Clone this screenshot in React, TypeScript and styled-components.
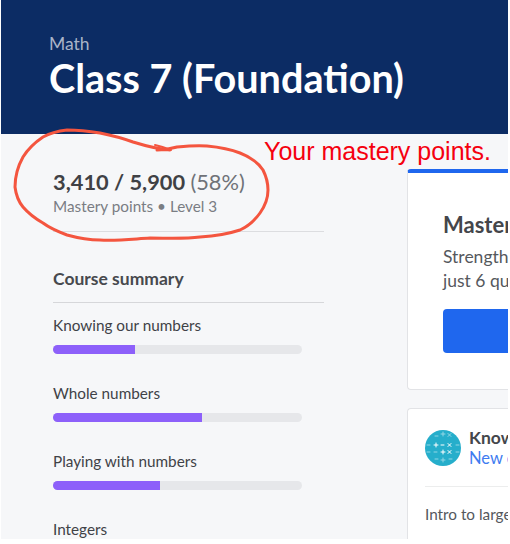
import React from "react";
import styled, { createGlobalStyle } from "styled-components";

const GlobalStyle = createGlobalStyle`
  html, body {
    margin: 0;
    padding: 0;
    background: #ffffff;
  }
`;

const Root = styled.div`
  position: relative;
  width: 510px;
  height: 544px;
  overflow: hidden;
  font-family: Lato, "Open Sans", sans-serif;
  background: #ffffff;
`;

const Page = styled.div`
  margin-left: 1px;
  margin-right: 2px;
  height: 539px;
  background: #f6f7f9;
  overflow: hidden;
`;

const Hero = styled.header`
  height: 134px;
  padding: 34px 0 0 48px;
  box-sizing: border-box;
  background: #0c2c64;
`;

const Subject = styled.div`
  font-size: 17.5px;
  line-height: 20px;
  color: #a9b4c8;
`;

const Title = styled.h1`
  margin: 0;
  font-size: 39.6px;
  line-height: 47px;
  font-weight: 700;
  color: #ffffff;
  white-space: nowrap;
`;

const Body = styled.div`
  display: flex;
`;

const Sidebar = styled.aside`
  width: 271px;
  margin-left: 52px;
  padding-top: 36px;
  flex-shrink: 0;
`;

const Score = styled.div`
  font-size: 21.8px;
  line-height: 24px;
  font-weight: 700;
  color: #3f4145;
`;

const Percent = styled.span`
  font-weight: 400;
  color: #6f7278;
`;

const ScoreLabel = styled.div`
  margin-top: 3px;
  font-size: 15.3px;
  line-height: 18px;
  color: #7a7d83;
  padding-bottom: 16px;
  border-bottom: 1px solid #dcdde0;
`;

const SummaryTitle = styled.h2`
  margin: 37px 0 0;
  padding-bottom: 13px;
  font-size: 17.5px;
  line-height: 20px;
  font-weight: 700;
  color: #47494e;
  border-bottom: 1px solid #d6d7da;
`;

const Units = styled.div`
  display: flex;
  flex-direction: column;
  gap: 30px;
  margin-top: 13px;
  width: 249px;
`;

const UnitName = styled.div`
  font-size: 15.3px;
  line-height: 18px;
  color: #3f4247;
`;

const Track = styled.div`
  height: 9px;
  margin-top: 11px;
  border-radius: 5px;
  background: #e6e7ea;
  overflow: hidden;
`;

const Fill = styled.div`
  height: 100%;
  background: #8d60fa;
`;

const Main = styled.main`
  flex: 1;
  margin-left: 83px;
  padding-top: 35px;
  display: flex;
  flex-direction: column;
  gap: 18px;
  min-width: 0;
`;

const Card = styled.section<{ $accent?: boolean }>`
  background: #ffffff;
  border: 1px solid #e2e3e6;
  border-right: none;
  border-radius: 4px 0 0 4px;
  box-sizing: border-box;
  ${({ $accent }) => ($accent ? "border-top: 4px solid #1f67ee;" : "")}
`;

const MasteryCard = styled(Card)`
  height: 221px;
  padding: 39px 0 0 35px;
  white-space: nowrap;
  overflow: hidden;
`;

const CardTitle = styled.div`
  font-size: 22px;
  line-height: 26px;
  font-weight: 700;
  color: #44464b;
`;

const CardText = styled.div`
  margin-top: 7px;
  font-size: 17.5px;
  line-height: 24px;
  color: #55585d;
`;

const StartButton = styled.div`
  height: 44px;
  margin-top: 16px;
  border-radius: 4px 0 0 4px;
  background: #1f67ee;
`;

const UnitCard = styled(Card)`
  height: 200px;
  padding: 19px 0 0 17px;
  white-space: nowrap;
  overflow: hidden;
`;

const UnitHead = styled.div`
  display: flex;
  align-items: center;
  gap: 8px;
  padding-bottom: 18px;
  border-bottom: 1px solid #eceded;
`;

const UnitTitle = styled.div`
  font-size: 17.5px;
  line-height: 20px;
  font-weight: 700;
  color: #44464b;
`;

const UnitLink = styled.div`
  font-size: 16.5px;
  line-height: 20px;
  color: #3f7cf0;
`;

const UnitDesc = styled.div`
  margin-top: 18px;
  font-size: 15.3px;
  line-height: 18px;
  color: #55585d;
`;

const Note = styled.div`
  position: absolute;
  left: 264px;
  top: 136px;
  font-family: "Liberation Sans", Arial, sans-serif;
  font-size: 25px;
  line-height: 30px;
  white-space: nowrap;
  color: #f5000f;
`;

const Scribble = styled.svg`
  position: absolute;
  left: 0;
  top: 120px;
`;

const units = [
  { name: "Knowing our numbers", value: 33 },
  { name: "Whole numbers", value: 60 },
  { name: "Playing with numbers", value: 43 },
  { name: "Integers", value: 0 },
];

const MathBadge = () => (
  <svg width="36" height="36" viewBox="0 0 36 36" style={{ flexShrink: 0 }}>
    <circle cx="18" cy="18" r="18" fill="#26aecb" />
    <g stroke="#ffffff" strokeWidth="1" strokeLinecap="round">
      <path d="M9 15h4M11 13v4M16 15h3M23 13.500l3 3M26 13.500l-3 3" />
      <path d="M16 22h4M18 20v4M23 20.500l3 3M26 20.500l-3 3" />
      <path d="M9 22h3M2 15h3M2 22h3M31 15h3M31 22h3" opacity="0.5" />
      <path d="M10 6h3M16 4h4M18 2v4M23 3.500l3 3M26 3.500l-3 3" opacity="0.5" />
      <path d="M16 30h4M18 28v4M10 29h3M24 29h3" opacity="0.5" />
    </g>
  </svg>
);

const App = () => (
  <Root>
    <GlobalStyle />
    <Page>
      <Hero>
        <Subject>Math</Subject>
        <Title>Class 7 (Foundation)</Title>
      </Hero>
      <Body>
        <Sidebar>
          <Score>
            3,410 / 5,900 <Percent>(58%)</Percent>
          </Score>
          <ScoreLabel>Mastery points • Level 3</ScoreLabel>
          <SummaryTitle>Course summary</SummaryTitle>
          <Units>
            {units.map((unit) => (
              <div key={unit.name}>
                <UnitName>{unit.name}</UnitName>
                <Track>
                  <Fill style={{ width: `${unit.value}%` }} />
                </Track>
              </div>
            ))}
          </Units>
        </Sidebar>
        <Main>
          <MasteryCard $accent>
            <CardTitle>Mastery challenge</CardTitle>
            <CardText>
              Strengthen your skills with
              <br />
              just 6 questions
            </CardText>
            <StartButton />
          </MasteryCard>
          <UnitCard>
            <UnitHead>
              <MathBadge />
              <div>
                <UnitTitle>Knowing our numbers</UnitTitle>
                <UnitLink>New concepts</UnitLink>
              </div>
            </UnitHead>
            <UnitDesc>Intro to large numbers</UnitDesc>
          </UnitCard>
        </Main>
      </Body>
    </Page>
    <Note>Your mastery points.</Note>
    <Scribble width="280" height="125" viewBox="0 120 280 125" fill="none">
      <path
        d="M170 150 C158 149 146 146 133 142 C122 138 110 135 100 133 C88 131 78 130 67 130 C58 131 50 133 43 137 C34 143 28 149 23 157 C18 166 15 176 15 187 C16 195 18 201 23 207 C29 214 36 219 43 223 C51 229 59 232 67 235 C78 238 89 240 100 240 C117 241 133 239 150 238 C167 238 184 239 200 237 C215 236 228 234 240 230 C249 226 255 220 260 213 C265 206 268 198 268 190 C268 182 266 176 263 170 C258 162 250 157 240 153 C230 149 218 147 207 146 C197 145 187 146 177 147 C170 149 164 150 157 150"
        stroke="#f4553f"
        strokeWidth="3"
        strokeLinecap="round"
      />
      <path d="M155 145 C160 146 166 148 171 150" stroke="#f4553f" strokeWidth="2" strokeLinecap="round" />
    </Scribble>
  </Root>
);

export default App;
